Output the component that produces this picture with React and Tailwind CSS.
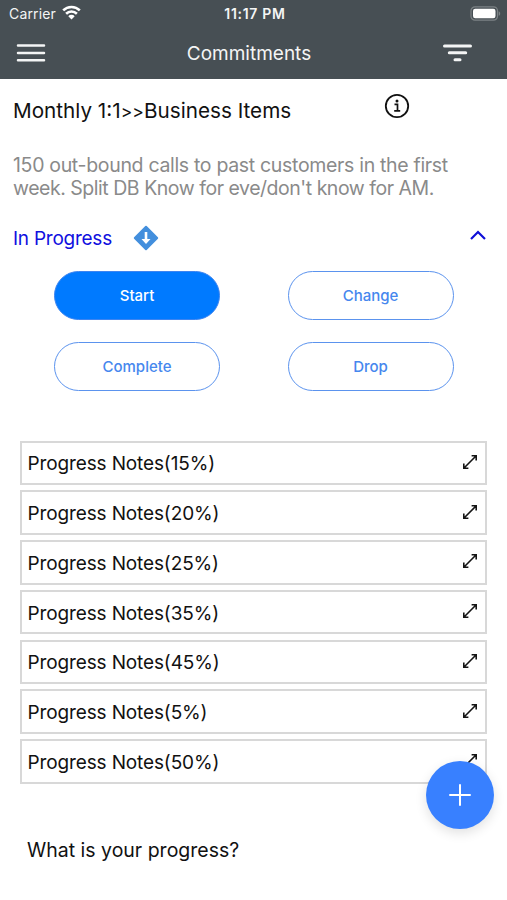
import React, { useState } from 'react';

const actions = ['Start', 'Change', 'Complete', 'Drop'];

const notes = [
  { id: 1, percent: 15 },
  { id: 2, percent: 20 },
  { id: 3, percent: 25 },
  { id: 4, percent: 35 },
  { id: 5, percent: 45 },
  { id: 6, percent: 5 },
  { id: 7, percent: 50 },
];

const StatusBar = () => (
  <div className="flex h-[27px] items-center justify-between pl-[9px] pr-[10px]">
    <div className="flex w-[100px] items-center gap-[6px]">
      <span className="text-[14px] leading-none tracking-[0.15px]">Carrier</span>
      <svg className="-mt-[2px]" width="19" height="15" viewBox="0 0 19 15" fill="none" stroke="white" strokeWidth="2.6">
        <path d="M1.2 5.4a11.8 11.8 0 0 1 16.6 0" />
        <path d="M4.1 8.7a7.7 7.7 0 0 1 10.8 0" />
        <path d="M9.5 14.4L6.3 11.2a4.5 4.5 0 0 1 6.4 0z" fill="white" stroke="none" />
      </svg>
    </div>
    <span className="mt-[1px] text-[14px] leading-none font-semibold tracking-[0.7px]">11:17 PM</span>
    <div className="-mr-[4px] flex w-[100px] justify-end">
      <svg width="31" height="15" viewBox="0 0 31 15" fill="none">
        <rect x="1" y="0.8" width="26.5" height="13.4" rx="4" stroke="#7c8285" strokeWidth="1.2" />
        <rect x="3" y="2.8" width="22.5" height="9.4" rx="2.2" fill="white" />
        <path d="M28.7 5.2c2 .8 2 3.8 0 4.6z" fill="#7c8285" />
      </svg>
    </div>
  </div>
);

const Header = () => (
  <header className="h-[79px] bg-[#474f54] text-[#f4f5f5]">
    <StatusBar />
    <div className="flex h-[52px] items-center justify-between pl-[16px] pr-[34px]">
      <button className="w-[30px]">
        <svg width="30" height="20" viewBox="0 0 30 20" stroke="#f4f5f5" strokeWidth="2.5" strokeLinecap="round">
          <path d="M2 2.5h26M2 10h26M2 17.3h26" />
        </svg>
      </button>
      <h1 className="ml-[10px] text-[19px] leading-none">Commitments</h1>
      <button>
        <svg width="31" height="20" viewBox="0 0 31 20" stroke="#f4f5f5" strokeWidth="3" strokeLinecap="round">
          <path d="M2.5 3h26M7.3 9.8h16.4M13 16.7h5" />
        </svg>
      </button>
    </div>
  </header>
);

const InfoIcon = () => (
  <svg width="26" height="26" viewBox="0 0 26 26" fill="none" stroke="#111" strokeWidth="1.8">
    <circle cx="13" cy="13" r="11.2" />
    <path d="M10.5 11.4h3v6.3M10.2 17.9h6" strokeWidth="1.7" />
    <circle cx="13" cy="7.9" r="1.5" fill="#111" stroke="none" />
  </svg>
);

const PriorityIcon = () => (
  <svg width="26" height="26" viewBox="0 0 26 26" fill="none">
    <path d="M13 1.8L24.2 13 13 24.2 1.8 13z" fill="#438fdd" stroke="#438fdd" strokeWidth="2" strokeLinejoin="round" />
    <path d="M13 7v8" stroke="white" strokeWidth="2.6" />
    <path d="M8.5 14h9L13 19z" fill="white" />
  </svg>
);

const ExpandIcon = () => (
  <svg width="16" height="16" viewBox="0 0 16 16" fill="none" stroke="#151515" strokeWidth="1.6">
    <path d="M1.8 14.2L14.2 1.8M9.6 1.8h4.6v4.6M1.8 9.6v4.6h4.6" />
  </svg>
);

const App = () => {
  const [active, setActive] = useState('Start');
  const [open, setOpen] = useState(true);

  return (
    <div className="relative h-[900px] w-[507px] overflow-hidden bg-white font-['Inter','Liberation_Sans',sans-serif] text-[#111]">
      <Header />

      <main>
        <div className="flex pl-[13px] pt-[14px]">
          <h2 className="w-[371px] pt-[4px] text-[20.7px] leading-[28px] whitespace-nowrap">
            Monthly 1:1<span className="text-[17.5px] tracking-[0.1px]">&gt;&gt;</span>Business Items
          </h2>
          <InfoIcon />
        </div>

        <p className="mt-[27.5px] pl-[13px] text-[19.5px] leading-[23.5px] text-[#8a8a8a]">
          <span className="tracking-[-0.32px]">150 out-bound calls to past customers in the first</span>
          <br />
          <span className="tracking-[-0.47px]">week. Split DB Know for eve/don't know for AM.</span>
        </p>

        <div className="mt-[24.5px] flex h-[26px] items-center pl-[13px] pr-[20px]">
          <span className="w-[120px] text-[19px] leading-none tracking-[-0.25px] text-[#1010e0]">In Progress</span>
          <PriorityIcon />
          <button className="-mt-[7px] ml-auto" onClick={() => setOpen(!open)}>
            <svg width="18" height="12" viewBox="0 0 18 12" fill="none" stroke="#1010d8" strokeWidth="2.2">
              <path d="M2 10l7-7 7 7" />
            </svg>
          </button>
        </div>

        <div className="mt-[20px] grid grid-cols-[166px_166px] gap-x-[67.5px] gap-y-[22px] pl-[54px]">
          {actions.map(action => (
            <button
              key={action}
              onClick={() => setActive(action)}
              className={`h-[49px] rounded-full border pt-[2px] text-[15px] font-medium ${
                active === action
                  ? 'border-[#3d84f0] bg-[#007aff] text-white'
                  : 'border-[#5b93ee] bg-white text-[#4687ee]'
              }`}
            >
              {action}
            </button>
          ))}
        </div>

        {open && (
          <div className="mx-[20px] mt-[49.5px] flex flex-col gap-[5.3px]">
            {notes.map(note => (
              <div
                key={note.id}
                className="flex h-[44.5px] items-center justify-between border-2 border-[#d8d8d8] pl-[5.5px] pr-[7.5px]"
              >
                <span className="pt-[2px] text-[19px] leading-none tracking-[-0.13px]">Progress Notes({note.percent}%)</span>
                <span className="-mt-[2px]"><ExpandIcon /></span>
              </div>
            ))}
          </div>
        )}

        <p className="mt-[52px] pl-[27px] text-[19.5px] leading-[28px]">What is your progress?</p>
      </main>

      <button className="absolute left-[426px] top-[761px] flex size-[68px] items-center justify-center rounded-full bg-[#3880ff] shadow-[0_4px_12px_rgba(0,0,0,0.12)]">
        <svg width="22" height="22" viewBox="0 0 22 22" stroke="white" strokeWidth="2" strokeLinecap="round">
          <path d="M11 1v20M1 11h20" />
        </svg>
      </button>
    </div>
  );
};

export default App;
